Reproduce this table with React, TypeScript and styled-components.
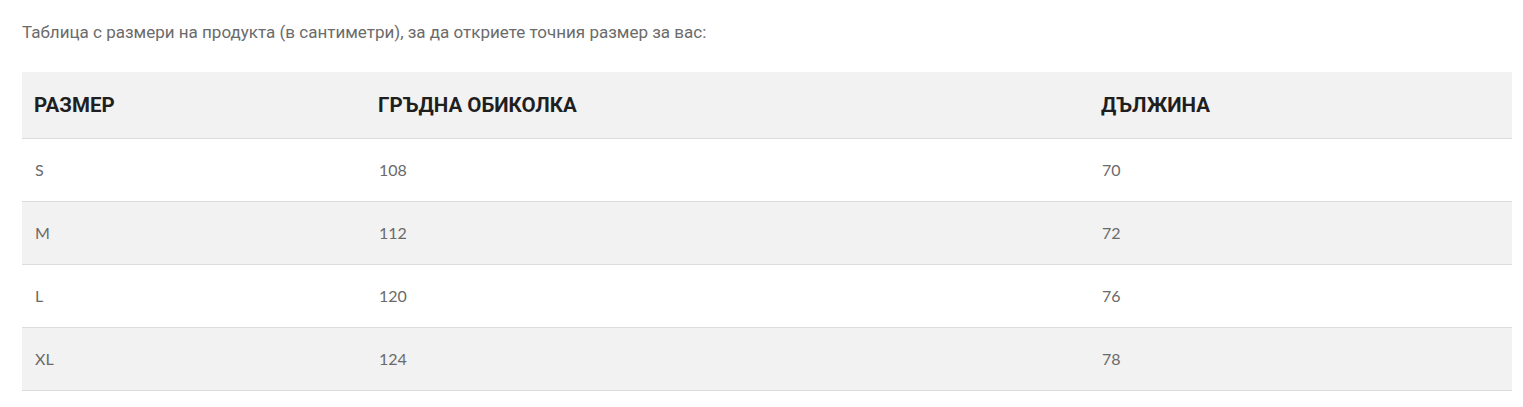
import styled, { createGlobalStyle } from "styled-components";

const GlobalStyle = createGlobalStyle`
  body {
    margin: 0;
    background: #ffffff;
  }
`;

const Page = styled.div`
  padding: 20px 11px 0 22px;
`;

const Intro = styled.p`
  margin: 0 0 28px;
  font-family: "Liberation Sans Narrow", "Roboto", "Liberation Sans", sans-serif;
  font-size: 17px;
  line-height: 24px;
  color: #6b6b6b;
`;

const Table = styled.table`
  width: 1490px;
  border-collapse: collapse;
`;

const HeadCell = styled.th<{ $width: number }>`
  width: ${(p) => p.$width}px;
  height: 66px;
  padding: 0 12px;
  box-sizing: border-box;
  text-align: left;
  font-family: "Roboto", "Liberation Sans", sans-serif;
  font-weight: 700;
  font-size: 20.5px;
  color: #1f1f1f;
  background: #f2f2f2;
  border-bottom: 1px solid #dcdcdc;
`;

const Row = styled.tr<{ $shaded: boolean }>`
  background: ${(p) => (p.$shaded ? "#f2f2f2" : "#ffffff")};
  border-bottom: 1px solid #dcdcdc;
`;

const Cell = styled.td`
  height: 62px;
  padding: 0 12px 0 13px;
  font-family: "Lato", "Open Sans", sans-serif;
  font-size: 16px;
  color: #6a6a6a;
`;

const sizes = [
  { size: "S", chest: "108", length: "70" },
  { size: "M", chest: "112", length: "72" },
  { size: "L", chest: "120", length: "76" },
  { size: "XL", chest: "124", length: "78" },
];

export default function App() {
  return (
    <Page>
      <GlobalStyle />
      <Intro>
        Таблица с размери на продукта (в сантиметри), за да откриете точния размер за вас:
      </Intro>
      <Table>
        <thead>
          <tr>
            <HeadCell $width={344}>РАЗМЕР</HeadCell>
            <HeadCell $width={723}>ГРЪДНА ОБИКОЛКА</HeadCell>
            <HeadCell $width={423}>ДЪЛЖИНА</HeadCell>
          </tr>
        </thead>
        <tbody>
          {sizes.map((row, i) => (
            <Row key={row.size} $shaded={i % 2 === 1}>
              <Cell>{row.size}</Cell>
              <Cell>{row.chest}</Cell>
              <Cell>{row.length}</Cell>
            </Row>
          ))}
        </tbody>
      </Table>
    </Page>
  );
}
